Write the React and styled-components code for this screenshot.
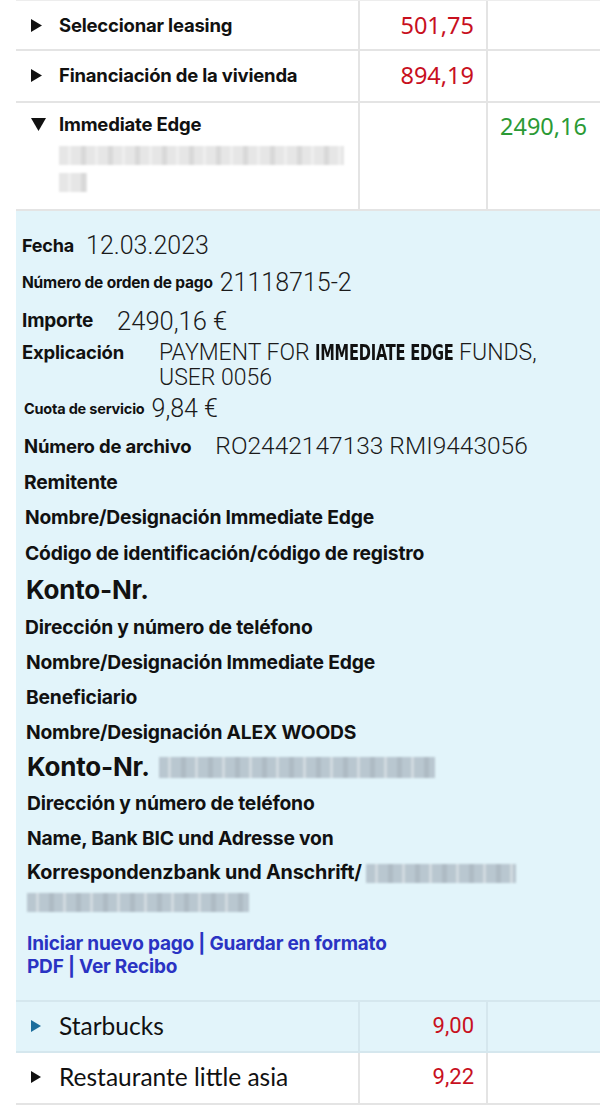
import React from 'react'
import styled, { createGlobalStyle } from 'styled-components'

const GlobalStyle = createGlobalStyle`
  html, body {
    margin: 0;
    padding: 0;
    background: #fff;
  }
  body {
    font-family: Inter, "Noto Sans", sans-serif;
    color: #111;
    overflow: hidden;
  }
`

const Table = styled.div`
  margin-left: 16px;
  border-top: 1px solid #ededed;
`

const Row = styled.div`
  display: grid;
  grid-template-columns: 344px 128px 1fr;
  height: ${({ h }) => h}px;
  box-sizing: border-box;
  background: ${({ tint }) => (tint ? '#e2f4fa' : '#fff')};
  border-bottom: 2px solid ${({ tint }) => (tint ? '#d5e7ee' : '#e4e4e4')};
`

const NameCell = styled.div`
  display: flex;
  align-items: flex-start;
  padding: ${({ top }) => top ?? 12}px 0 0 15px;
  border-right: 2px solid ${({ tint }) => (tint ? '#d5e7ee' : '#e4e4e4')};
`

const Arrow = styled.span`
  width: 28px;
  height: 24px;
  flex: none;
  display: flex;
  align-items: center;
`

const Stack = styled.div`
  display: flex;
  flex-direction: column;
`

const Title = styled.span`
  font-family: ${({ plain }) => (plain ? 'Lato, "Open Sans", sans-serif' : 'Inter, "Noto Sans", sans-serif')};
  font-weight: ${({ plain }) => (plain ? 400 : 700)};
  font-size: ${({ plain }) => (plain ? 24.5 : 18.5)}px;
  line-height: 24px;
  color: #111;
  letter-spacing: ${({ plain }) => (plain ? 0 : -0.2)}px;
`

const AmountCell = styled.div`
  padding: ${({ top }) => top ?? 12}px ${({ left }) => (left ? 0 : 12)}px 0 ${({ left }) => (left ? 12 : 0)}px;
  text-align: ${({ left }) => (left ? 'left' : 'right')};
  border-right: ${({ last, tint }) => (last ? 'none' : `2px solid ${tint ? '#d5e7ee' : '#e4e4e4'}`)};
  font-family: ${({ plain }) => (plain ? 'Roboto, "Noto Sans", sans-serif' : '"Noto Sans", Roboto, sans-serif')};
  font-weight: 400;
  font-size: ${({ plain }) => (plain ? 22 : 23.5)}px;
  line-height: 24px;
  color: ${({ green }) => (green ? '#2b9a35' : '#c8101e')};
`

const Blur = styled.span`
  display: ${({ inline }) => (inline ? 'inline-block' : 'block')};
  width: ${({ w }) => w}px;
  height: ${({ hh }) => hh ?? 19}px;
  margin-top: ${({ mt }) => mt ?? 0}px;
  vertical-align: middle;
  background:
    repeating-linear-gradient(90deg, transparent 0 9px, rgba(255, 255, 255, 0.35) 9px 12px, transparent 12px 22px, rgba(0, 0, 0, 0.06) 22px 27px),
    ${({ tone }) => tone};
  filter: blur(1.2px);
`

const Panel = styled.div`
  background: #e2f4fa;
  padding: 16px 0 22px 0;
  border-bottom: 2px solid #d5e7ee;
`

const Field = styled.div`
  display: flex;
  align-items: ${({ top }) => (top ? 'flex-start' : 'center')};
  height: ${({ h }) => h}px;
  padding-left: ${({ x }) => x}px;
  gap: ${({ gap }) => gap ?? 0}px;
`

const Label = styled.span`
  font-family: Inter, "Noto Sans", sans-serif;
  font-weight: 700;
  font-size: ${({ size }) => size ?? 19.3}px;
  line-height: ${({ lh }) => lh ?? 24}px;
  color: #111;
  letter-spacing: -0.2px;
  flex: none;
  width: ${({ w }) => (w ? `${w}px` : 'auto')};
`

const Value = styled.span`
  font-family: Roboto, "Noto Sans", sans-serif;
  font-weight: 300;
  font-size: ${({ size }) => size ?? 25}px;
  line-height: ${({ lh }) => lh ?? 28}px;
  color: #1a1a1a;
`

const Condensed = styled.span`
  display: inline-block;
  font-family: "DejaVu Sans Condensed", "DejaVu Sans", sans-serif;
  font-weight: 700;
  font-size: 22px;
  letter-spacing: -0.3px;
  color: #111;
  transform: scaleX(0.74);
  transform-origin: left center;
  margin-right: -49px;
`

const Para = styled.div`
  padding: 3px 0 0 ${({ x }) => x}px;
  font-family: Inter, "Noto Sans", sans-serif;
  font-weight: 700;
  font-size: 19.8px;
  line-height: 29px;
  letter-spacing: -0.2px;
  height: 58px;
`

const Links = styled.div`
  margin-top: 16px;
  padding-left: 11px;
  font-family: Inter, "Noto Sans", sans-serif;
  font-weight: 700;
  font-size: 19px;
  line-height: 23px;
  letter-spacing: -0.2px;
  color: #2a33c3;
  a {
    color: inherit;
    text-decoration: none;
  }
`

const Triangle = ({ down, color = '#111', size = 12 }) =>
  down ? (
    <svg width="15" height="13" viewBox="0 0 15 13">
      <polygon points="0,0 15,0 7.5,13" fill={color} />
    </svg>
  ) : (
    <svg width={size - 1} height={size + 1} viewBox="0 0 11 13">
      <polygon points="0,0 11,6.5 0,13" fill={color} />
    </svg>
  )

const PANEL_BLUR = '#b9c7d0'

export default function App() {
  return (
    <>
      <GlobalStyle />
      <Table>
        <Row h={50}>
          <NameCell>
            <Arrow><Triangle /></Arrow>
            <Title>Seleccionar leasing</Title>
          </NameCell>
          <AmountCell>501,75</AmountCell>
          <AmountCell last />
        </Row>
        <Row h={52}>
          <NameCell>
            <Arrow><Triangle /></Arrow>
            <Title>Financiación de la vivienda</Title>
          </NameCell>
          <AmountCell>894,19</AmountCell>
          <AmountCell last />
        </Row>
        <Row h={108}>
          <NameCell top={9}>
            <Arrow><Triangle down /></Arrow>
            <Stack>
              <Title>Immediate Edge</Title>
              <Blur w={285} tone="#e6e6e6" mt={10} />
              <Blur w={28} tone="#e6e6e6" mt={8} />
            </Stack>
          </NameCell>
          <AmountCell top={9} />
          <AmountCell top={11} left last green>2490,16</AmountCell>
        </Row>

        <Panel>
          <Field h={37} x={6} gap={12}>
            <Label size={18}>Fecha</Label>
            <Value>12.03.2023</Value>
          </Field>
          <Field h={37} x={6} gap={7}>
            <Label size={15.5}>Número de orden de pago</Label>
            <Value>21118715-2</Value>
          </Field>
          <Field h={39} x={6} gap={24}>
            <Label size={19}>Importe</Label>
            <Value size={25.5}>2490,16 €</Value>
          </Field>
          <Field h={50} x={6} top>
            <Label size={18.5} lh={25} w={137}>Explicación</Label>
            <Value size={23} lh={25}>
              PAYMENT FOR <Condensed>IMMEDIATE EDGE</Condensed> FUNDS,
              <br />
              USER 0056
            </Value>
          </Field>
          <Field h={38} x={8} gap={7}>
            <Label size={14.5}>Cuota de servicio</Label>
            <Value size={25}>9,84 €</Value>
          </Field>
          <Field h={36} x={8} gap={24}>
            <Label size={18.5}>Número de archivo</Label>
            <Value size={24.5}>RO2442147133 RMI9443056</Value>
          </Field>
          <Field h={35} x={8}>
            <Label>Remitente</Label>
          </Field>
          <Field h={35} x={9}>
            <Label>Nombre/Designación Immediate Edge</Label>
          </Field>
          <Field h={37} x={9}>
            <Label>Código de identificación/código de registro</Label>
          </Field>
          <Field h={38} x={10}>
            <Label size={26}>Konto-Nr.</Label>
          </Field>
          <Field h={36} x={9}>
            <Label>Dirección y número de teléfono</Label>
          </Field>
          <Field h={34} x={10}>
            <Label>Nombre/Designación Immediate Edge</Label>
          </Field>
          <Field h={35} x={10}>
            <Label>Beneficiario</Label>
          </Field>
          <Field h={35} x={10}>
            <Label>Nombre/Designación ALEX WOODS</Label>
          </Field>
          <Field h={36} x={11} gap={9}>
            <Label size={26}>Konto-Nr.</Label>
            <Blur w={276} hh={21} tone={PANEL_BLUR} />
          </Field>
          <Field h={35} x={11}>
            <Label>Dirección y número de teléfono</Label>
          </Field>
          <Field h={35} x={11}>
            <Label>Name, Bank BIC und Adresse von</Label>
          </Field>
          <Para x={11}>
            Korrespondenzbank und Anschrift/ <Blur inline w={150} tone={PANEL_BLUR} />
            <br />
            <Blur inline w={222} tone={PANEL_BLUR} />
          </Para>
          <Links>
            <a href="#nuevo">Iniciar nuevo pago</a> | <a href="#pdf">Guardar en formato</a>
            <br />
            <a href="#pdf">PDF</a> | <a href="#recibo">Ver Recibo</a>
          </Links>
        </Panel>

        <Row h={51} tint>
          <NameCell tint>
            <Arrow><Triangle color="#1b6d9c" size={11} /></Arrow>
            <Title plain>Starbucks</Title>
          </NameCell>
          <AmountCell plain tint>9,00</AmountCell>
          <AmountCell last />
        </Row>
        <Row h={52}>
          <NameCell>
            <Arrow><Triangle size={11} /></Arrow>
            <Title plain>Restaurante little asia</Title>
          </NameCell>
          <AmountCell plain>9,22</AmountCell>
          <AmountCell last />
        </Row>
      </Table>
    </>
  )
}
